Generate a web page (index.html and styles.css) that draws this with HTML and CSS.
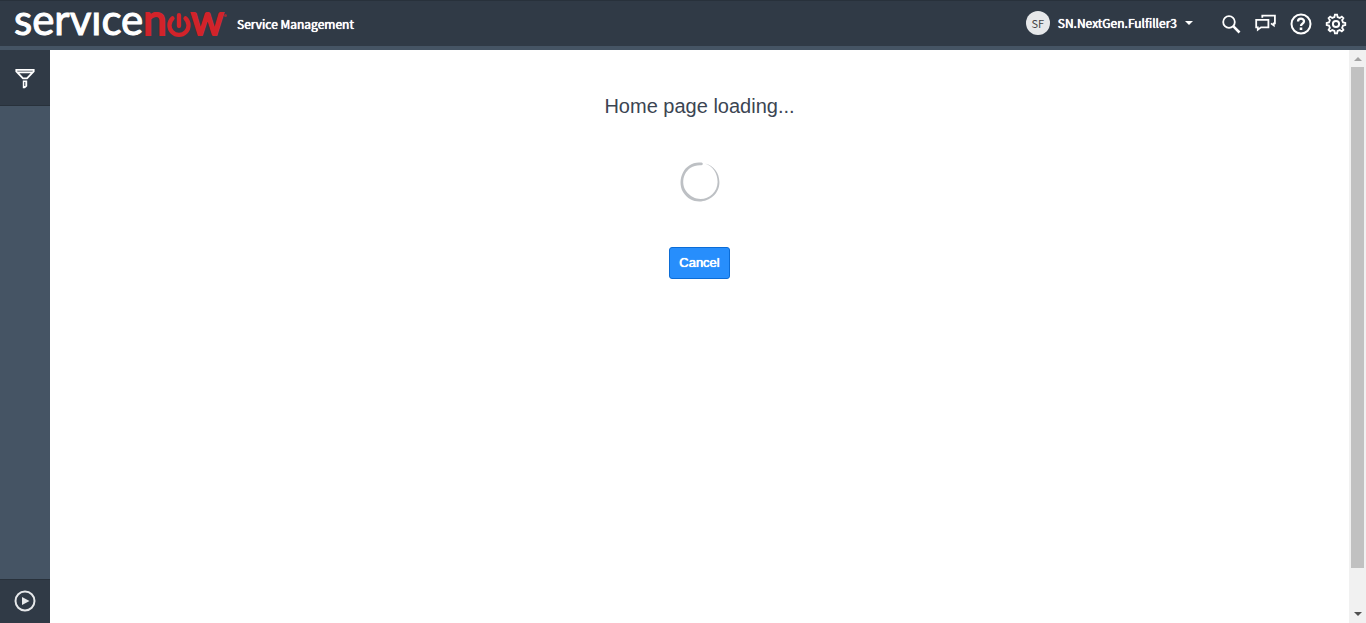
FILE: index.html
```html
<!DOCTYPE html>
<html lang="en">
<head>
<meta charset="utf-8">
<title>ServiceNow Service Management</title>
<link rel="stylesheet" href="styles.css">
</head>
<body>
<header class="header">
  <a class="logo" href="#" aria-label="servicenow">
    <span class="logo-service">servıce</span><span class="logo-now">n</span><svg class="logo-power" viewBox="1 2 22 24" aria-hidden="true"><path d="M6 7A8.8 8.8 0 1 0 18 7M12 4V14"/></svg><span class="logo-now">w</span><i class="logo-mark"></i>
  </a>
  <span class="product">Service Management</span>
  <button class="user" type="button">
    <span class="avatar">SF</span>
    <span class="user-name">SN.NextGen.Fulfiller3</span>
    <i class="caret"></i>
  </button>
  <nav class="tools">
    <button class="tool" type="button" aria-label="Search"><svg viewBox="0 0 22 22"><circle cx="9" cy="9" r="5.8"/><path d="M13.2 13.2L19.5 19.5" stroke-width="2.6"/></svg></button>
    <button class="tool" type="button" aria-label="Connect"><svg viewBox="0 0 22 22"><path d="M1.2 6.8H13.4V14.4H6L2.8 16.8V14.4H1.2ZM7.3 4.8V2.7H19.9V10.4H18.8V12.5L16 10.4"/></svg></button>
    <button class="tool" type="button" aria-label="Help"><svg viewBox="0 0 22 22"><circle cx="11" cy="11" r="9.5" stroke-width="2"/><path d="M8 8.6C8 4.6 14 4.8 14 8.3C14 10.6 11 10.6 11 13" stroke-width="2.3"/><path d="M11 14.5V17" stroke-width="2.6"/></svg></button>
    <button class="tool" type="button" aria-label="Settings"><svg viewBox="0 0 22 22"><path d="M9.4 4L9.9 1.7H12.1L12.6 4L14.8 4.9L16.8 3.6L18.4 5.2L17.1 7.2L18 9.4L20.3 9.9V12.1L18 12.6L17.1 14.8L18.4 16.8L16.8 18.4L14.8 17.1L12.6 18L12.1 20.3H9.9L9.4 18L7.2 17.1L5.2 18.4L3.6 16.8L4.9 14.8L4 12.6L1.7 12.1V9.9L4 9.4L4.9 7.2L3.6 5.2L5.2 3.6L7.2 4.9Z"/><circle cx="11" cy="11" r="3.1" stroke-width="2"/></svg></button>
  </nav>
</header>
<div class="body">
  <aside class="sidebar">
    <button class="side-button side-filter" type="button" aria-label="Filter navigator"><svg viewBox="0 0 22 22"><path d="M2.3 2.8H19.7V4.3L13 11.3H9L2.3 4.3ZM3 5.3H19"/><path class="solid" d="M8.8 13.5H13.2V19.3L11 21.3H8.8Z"/><path class="slot" d="M10.8 15V19"/></svg></button>
    <button class="side-button side-expand" type="button" aria-label="Expand navigator"><svg viewBox="0 0 22 22"><circle cx="11" cy="11" r="9.5" stroke-width="2"/><path class="solid" d="M8 7L15.5 11L8 15Z"/></svg></button>
  </aside>
  <main class="main">
    <h1 class="title">Home page loading...</h1>
    <svg class="spinner" viewBox="0 0 40 40" role="img" aria-label="Loading">
      <path d="M21.5 .6C5 -1.5 -4 17 3 30C14 48 40 38 39.4 20C39.3 11 34 4 25 1.6C33 4.5 37.5 11 37.6 20C37.4 36 17 44 6 29C-1 18 6 2 21.5 3.2C23.3 3.2 23.3 .8 21.5 .6Z"/>
    </svg>
    <button class="cancel" type="button">Cancel</button>
  </main>
  <div class="scrollbar" aria-hidden="true">
    <i class="arrow arrow-up"></i>
    <div class="track"><div class="thumb"></div></div>
    <i class="arrow arrow-down"></i>
  </div>
</div>
</body>
</html>
```
FILE: styles.css
```css
* { box-sizing: border-box; }
body {
  margin: 0;
  height: 100vh;
  display: flex;
  flex-direction: column;
  overflow: hidden;
  font-family: "Noto Sans CJK SC", "Noto Sans", sans-serif;
  color: #303a46;
}
button { font: inherit; color: inherit; background: none; border: 0; padding: 0; }
svg { fill: none; stroke: currentColor; stroke-width: 1.8; }
.header {
  flex: none;
  display: flex;
  align-items: center;
  height: 50px;
  padding: 0 19px 0 14px;
  background: #303a46;
  border-top: 1px solid #28313b;
  border-bottom: 4px solid #455464;
  color: #fff;
}
.logo {
  display: flex;
  align-items: center;
  width: 223px;
  padding-bottom: 9px;
  font: 42px/50px Lato, sans-serif;
  color: #fff;
  text-decoration: none;
}
.logo-service { font-weight: 400; -webkit-text-stroke: 1px #fff; }
.logo-now { color: #d2232a; font-weight: 400; -webkit-text-stroke: 2px #d2232a; }
.logo-power { width: 24px; height: 26px; margin-top: 13px; color: #d2232a; stroke-width: 4; stroke-linecap: round; }
.logo-mark { width: 3px; height: 3px; margin-bottom: 8px; border-radius: 50%; background: #9c2b33; }
.product, .user { font-size: 12px; font-weight: 400; line-height: 20px; }
.product, .user-name, .cancel { text-shadow: 0 0 0 #fff, 0 0 1px #fff; }
.user { display: flex; align-items: center; gap: 8px; margin-left: auto; padding-bottom: 2px; }
.avatar {
  width: 24px;
  height: 24px;
  border-radius: 50%;
  background: #e6e8ea;
  color: #444;
  font-size: 11px;
  line-height: 24px;
  text-align: center;
}
.caret { border: 4px solid transparent; border-top-color: #fff; border-bottom: 0; }
.tools { display: flex; gap: 13px; margin-left: 27px; }
.tool, .tool svg { display: block; width: 22px; height: 22px; }
.body { flex: 1; display: flex; min-height: 0; }
.sidebar {
  flex: none;
  width: 50px;
  display: flex;
  flex-direction: column;
  justify-content: space-between;
  background: #455464;
  color: #fff;
}
.side-button { display: flex; align-items: center; justify-content: center; background: #303a46; }
.side-button svg { width: 22px; height: 22px; }
.side-filter { height: 56px; border-bottom: 1px solid #28313b; }
.side-expand { height: 44px; padding-bottom: 1px; border-top: 1px solid #28313b; color: #e6e8ea; }
.solid { fill: currentColor; stroke: none; }
.slot { stroke: #303a46; stroke-width: 1; }
.main { flex: 1; display: flex; flex-direction: column; align-items: center; padding-top: 42px; background: #fff; font-family: "Liberation Sans", Arial, sans-serif; }
.title { margin: 0; font-size: 20px; font-weight: 400; line-height: 28px; color: #3b4552; }
.spinner { width: 40px; height: 40px; margin: 42px 0 45px; overflow: visible; }
.spinner path { fill: #bdc0c4; stroke: none; }
.cancel {
  height: 32px;
  padding: 0 9px 2px;
  border: 1px solid #0b6cd6;
  border-radius: 3px;
  background: #278efc;
  color: #fff;
  font-size: 13px;
}
.scrollbar { flex: none; width: 17px; display: flex; flex-direction: column; align-items: center; background: #f1f1f1; }
.arrow { margin: 7px 0; border: 4px solid transparent; }
.arrow-up { border-bottom-color: #a3a3a3; border-top: 0; margin-bottom: 6px; }
.arrow-down { border-top-color: #505050; border-bottom: 0; margin-top: 6px; }
.track { flex: 1; width: 13px; }
.thumb { height: 93%; background: #c1c1c1; }
```
